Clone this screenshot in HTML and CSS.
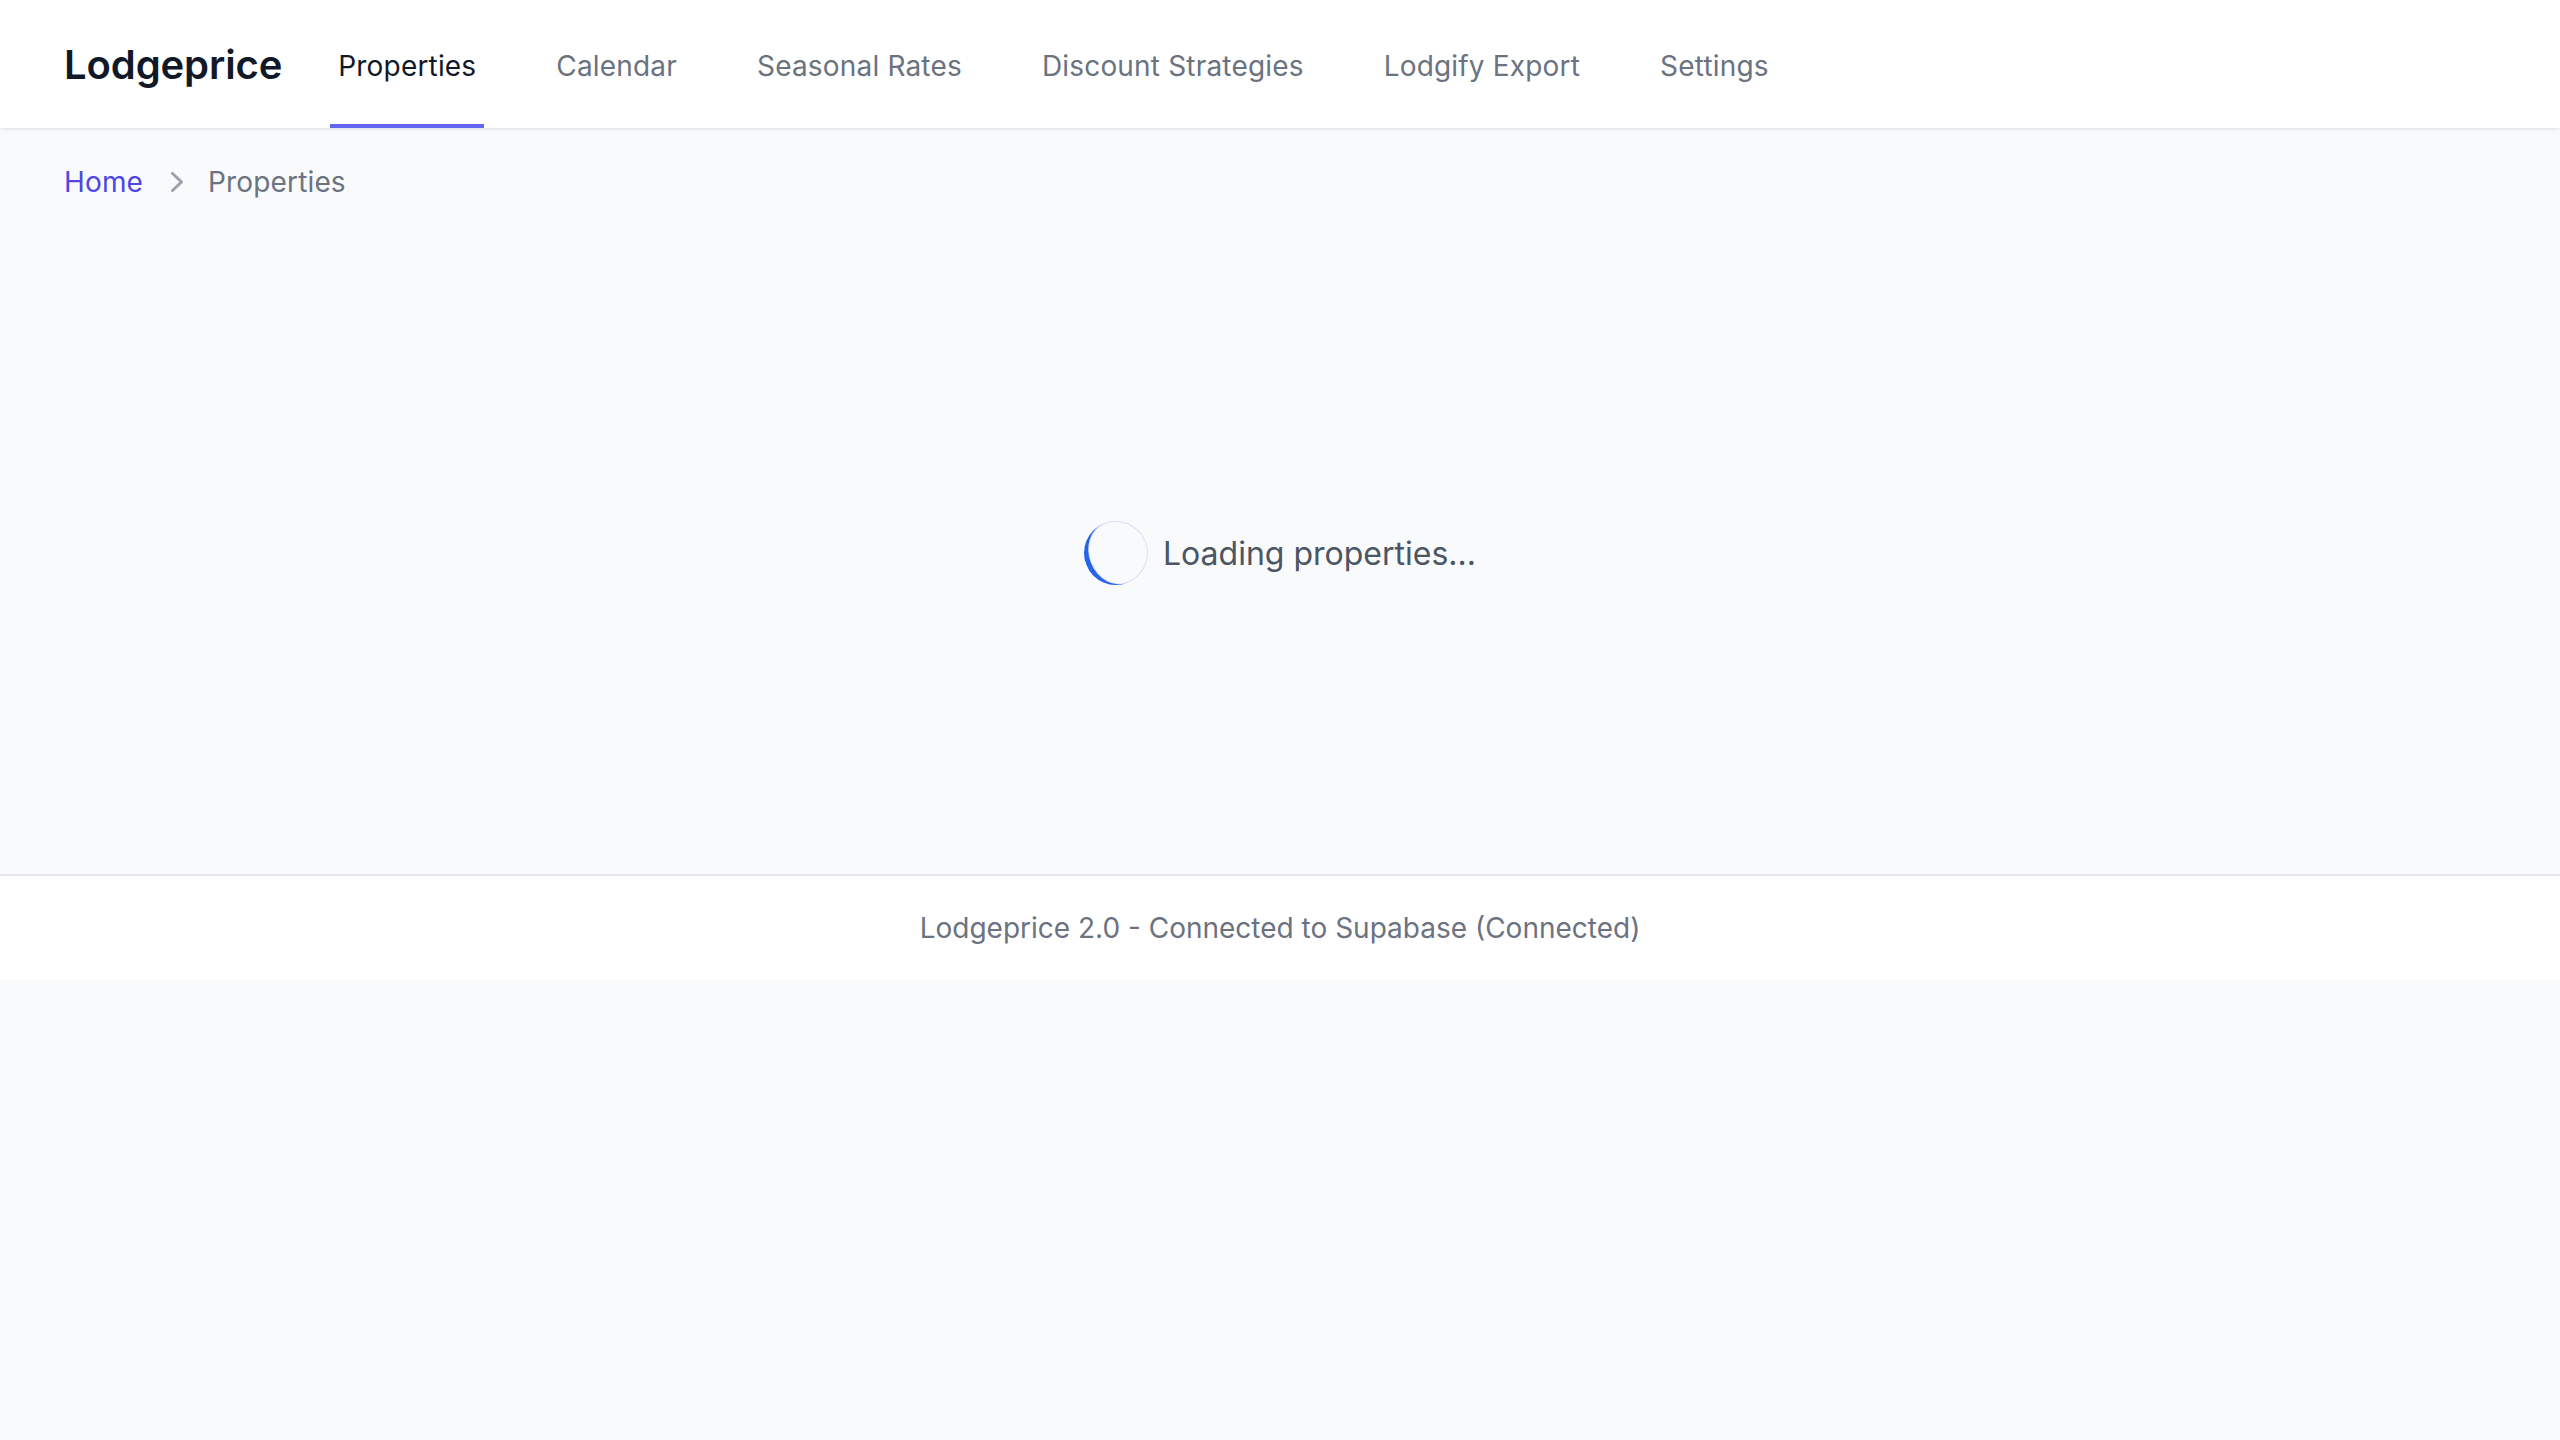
FILE: index.html
```html
<!DOCTYPE html>
<html lang="en">
<head>
<meta charset="utf-8">
<title>Lodgeprice</title>
<link rel="stylesheet" href="styles.css">
</head>
<body>
<header class="topbar">
  <div class="brand">Lodgeprice</div>
  <nav class="nav">
    <a class="nav-item active">Properties</a>
    <a class="nav-item">Calendar</a>
    <a class="nav-item">Seasonal Rates</a>
    <a class="nav-item">Discount Strategies</a>
    <a class="nav-item">Lodgify Export</a>
    <a class="nav-item">Settings</a>
  </nav>
</header>
<main class="main">
  <div class="crumbs">
    <a class="crumb-link">Home</a>
    <svg class="crumb-sep" viewBox="0 0 20 20" fill="currentColor" aria-hidden="true"><path fill-rule="evenodd" d="M7.21 14.77a.75.75 0 01.02-1.06L11.168 10 7.23 6.29a.75.75 0 111.04-1.08l4.5 4.25a.75.75 0 010 1.08l-4.5 4.25a.75.75 0 01-1.06-.02z" clip-rule="evenodd"/></svg>
    <span class="crumb-current">Properties</span>
  </div>
  <div class="loading">
    <div class="spinner"></div>
    <span class="loading-text">Loading properties...</span>
  </div>
</main>
<footer class="footer">Lodgeprice 2.0 - Connected to Supabase (Connected)</footer>
</body>
</html>
```
FILE: styles.css
```css
* { box-sizing: border-box; }
html, body { margin: 0; padding: 0; }
body {
  background: #f9fafb;
  font-family: Inter, "Noto Sans", sans-serif;
  color: #111827;
}
.topbar {
  height: 128px;
  background: #ffffff;
  display: flex;
  align-items: stretch;
  padding: 0 64px;
  box-shadow: 0 2px 4px 0 rgba(0, 0, 0, 0.06), 0 1px 2px 0 rgba(0, 0, 0, 0.04);
  position: relative;
  z-index: 1;
}
.brand {
  display: flex;
  align-items: center;
  font-size: 40px;
  font-weight: 600;
  color: #111827;
  letter-spacing: -0.1px;
}
.nav {
  display: flex;
  gap: 64px;
  margin-left: 48px;
}
.nav-item {
  display: inline-flex;
  align-items: center;
  padding: 7px 8px 0;
  border-bottom: 4px solid transparent;
  font-size: 28px;
  font-weight: 400;
  letter-spacing: 0.18px;
  color: #6b7280;
  text-decoration: none;
}
.nav-item.active {
  color: #111827;
  border-bottom-color: #6366f1;
}
.main {
  padding: 34px 64px 32px;
}
.crumbs {
  display: flex;
  align-items: center;
  height: 40px;
  font-size: 28px;
  letter-spacing: 0.15px;
  margin-bottom: 64px;
}
.crumb-link { color: #4f46e5; }
.crumb-sep {
  width: 40px;
  height: 40px;
  color: #9ca3af;
  margin: 0 11px 0 14px;
}
.crumb-current { color: #6b7280; }
.loading {
  display: flex;
  align-items: center;
  justify-content: center;
  padding: 255px 0 257px;
}
.spinner {
  width: 64px;
  height: 64px;
  border-radius: 50%;
  border-bottom: 5px solid #2563eb;
  box-shadow: inset 0 0 0 1px rgba(37, 99, 235, 0.16);
  transform: rotate(68deg);
}
.loading-text {
  margin-left: 15px;
  font-size: 32px;
  color: #4b5563;
}
.footer {
  background: #ffffff;
  border-top: 2px solid #e5e7eb;
  padding: 32px 0;
  line-height: 40px;
  text-align: center;
  font-size: 28px;
  color: #6b7280;
}
```
